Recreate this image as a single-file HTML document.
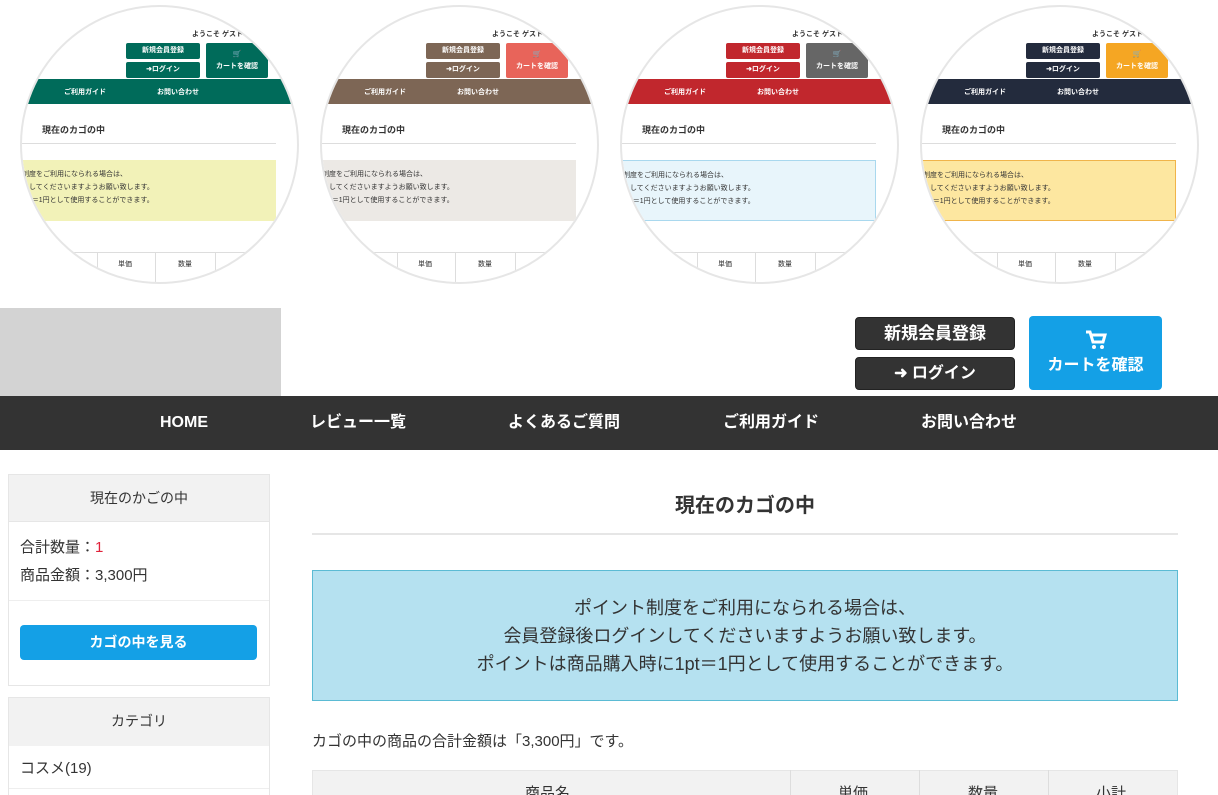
<!DOCTYPE html>
<html><head><meta charset="utf-8"><style>
*{margin:0;padding:0;box-sizing:border-box}
html,body{width:1218px;height:795px;overflow:hidden}
body{background:#fff;font-family:"Liberation Sans","Noto Sans CJK JP",sans-serif;color:#333;position:relative}
.a{position:absolute}
.c{position:absolute;top:5px;width:279px;height:279px;border-radius:50%;overflow:hidden;border:2px solid #e6e6e6;background:#fff}
.c .a{font-size:7px;font-weight:bold}
.btn{color:#fff;text-align:center;border-radius:2px;line-height:15px}
.nav{color:#fff;font-size:16px;font-weight:bold;top:396px;height:54px;line-height:54px}
</style></head><body>

<div class="c" style="left:20px">
 <div class="a" style="left:170px;top:22px;color:#333">ようこそ ゲスト</div>
 <div class="a btn" style="left:104px;top:36px;width:74px;height:16px;background:#006b5a">新規会員登録</div>
 <div class="a btn" style="left:104px;top:55px;width:74px;height:16px;background:#006b5a">➜ログイン</div>
 <div class="a btn" style="left:184px;top:36px;width:62px;height:35px;background:#006b5a;line-height:12px;padding-top:6px">🛒<br>カートを確認</div>
 <div class="a" style="left:0;top:72px;width:279px;height:25px;background:#006b5a"></div>
 <div class="a" style="left:42px;top:80px;color:#fff">ご利用ガイド</div>
 <div class="a" style="left:135px;top:80px;color:#fff">お問い合わせ</div>
 <div class="a" style="left:20px;top:116px;font-size:9px;color:#333">現在のカゴの中</div>
 <div class="a" style="left:0;top:136px;width:254px;height:1px;background:#ddd"></div>
 <div class="a" style="left:0;top:153px;width:254px;height:61px;background:#f2f2b8;font-weight:normal;color:#333;padding:8px 0 0 0;line-height:13px">制度をご利用になられる場合は、<br>・してくださいますようお願い致します。<br>1pt＝1円として使用することができます。</div>
 <div class="a" style="left:0;top:245px;width:279px;height:1px;background:#ddd"></div>
 <div class="a" style="left:75px;top:245px;width:1px;height:40px;background:#ddd"></div>
 <div class="a" style="left:133px;top:245px;width:1px;height:40px;background:#ddd"></div>
 <div class="a" style="left:193px;top:245px;width:1px;height:40px;background:#ddd"></div>
 <div class="a" style="left:96px;top:252px;font-weight:normal">単価</div>
 <div class="a" style="left:156px;top:252px;font-weight:normal">数量</div>
</div>

<div class="c" style="left:320px">
 <div class="a" style="left:170px;top:22px;color:#333">ようこそ ゲスト</div>
 <div class="a btn" style="left:104px;top:36px;width:74px;height:16px;background:#7d6655">新規会員登録</div>
 <div class="a btn" style="left:104px;top:55px;width:74px;height:16px;background:#7d6655">➜ログイン</div>
 <div class="a btn" style="left:184px;top:36px;width:62px;height:35px;background:#e8645a;line-height:12px;padding-top:6px">🛒<br>カートを確認</div>
 <div class="a" style="left:0;top:72px;width:279px;height:25px;background:#7d6655"></div>
 <div class="a" style="left:42px;top:80px;color:#fff">ご利用ガイド</div>
 <div class="a" style="left:135px;top:80px;color:#fff">お問い合わせ</div>
 <div class="a" style="left:20px;top:116px;font-size:9px;color:#333">現在のカゴの中</div>
 <div class="a" style="left:0;top:136px;width:254px;height:1px;background:#ddd"></div>
 <div class="a" style="left:0;top:153px;width:254px;height:61px;background:#ece9e5;font-weight:normal;color:#333;padding:8px 0 0 0;line-height:13px">制度をご利用になられる場合は、<br>・してくださいますようお願い致します。<br>1pt＝1円として使用することができます。</div>
 <div class="a" style="left:0;top:245px;width:279px;height:1px;background:#ddd"></div>
 <div class="a" style="left:75px;top:245px;width:1px;height:40px;background:#ddd"></div>
 <div class="a" style="left:133px;top:245px;width:1px;height:40px;background:#ddd"></div>
 <div class="a" style="left:193px;top:245px;width:1px;height:40px;background:#ddd"></div>
 <div class="a" style="left:96px;top:252px;font-weight:normal">単価</div>
 <div class="a" style="left:156px;top:252px;font-weight:normal">数量</div>
</div>

<div class="c" style="left:620px">
 <div class="a" style="left:170px;top:22px;color:#333">ようこそ ゲスト</div>
 <div class="a btn" style="left:104px;top:36px;width:74px;height:16px;background:#c1272d">新規会員登録</div>
 <div class="a btn" style="left:104px;top:55px;width:74px;height:16px;background:#c1272d">➜ログイン</div>
 <div class="a btn" style="left:184px;top:36px;width:62px;height:35px;background:#666;line-height:12px;padding-top:6px">🛒<br>カートを確認</div>
 <div class="a" style="left:0;top:72px;width:279px;height:25px;background:#c1272d"></div>
 <div class="a" style="left:42px;top:80px;color:#fff">ご利用ガイド</div>
 <div class="a" style="left:135px;top:80px;color:#fff">お問い合わせ</div>
 <div class="a" style="left:20px;top:116px;font-size:9px;color:#333">現在のカゴの中</div>
 <div class="a" style="left:0;top:136px;width:254px;height:1px;background:#ddd"></div>
 <div class="a" style="left:0;top:153px;width:254px;height:61px;background:#e8f5fb;border:1px solid #a9d8ee;font-weight:normal;color:#333;padding:8px 0 0 0;line-height:13px">制度をご利用になられる場合は、<br>・してくださいますようお願い致します。<br>1pt＝1円として使用することができます。</div>
 <div class="a" style="left:0;top:245px;width:279px;height:1px;background:#ddd"></div>
 <div class="a" style="left:75px;top:245px;width:1px;height:40px;background:#ddd"></div>
 <div class="a" style="left:133px;top:245px;width:1px;height:40px;background:#ddd"></div>
 <div class="a" style="left:193px;top:245px;width:1px;height:40px;background:#ddd"></div>
 <div class="a" style="left:96px;top:252px;font-weight:normal">単価</div>
 <div class="a" style="left:156px;top:252px;font-weight:normal">数量</div>
</div>

<div class="c" style="left:920px">
 <div class="a" style="left:170px;top:22px;color:#333">ようこそ ゲスト</div>
 <div class="a btn" style="left:104px;top:36px;width:74px;height:16px;background:#232b3d">新規会員登録</div>
 <div class="a btn" style="left:104px;top:55px;width:74px;height:16px;background:#232b3d">➜ログイン</div>
 <div class="a btn" style="left:184px;top:36px;width:62px;height:35px;background:#f5a623;line-height:12px;padding-top:6px">🛒<br>カートを確認</div>
 <div class="a" style="left:0;top:72px;width:279px;height:25px;background:#232b3d"></div>
 <div class="a" style="left:42px;top:80px;color:#fff">ご利用ガイド</div>
 <div class="a" style="left:135px;top:80px;color:#fff">お問い合わせ</div>
 <div class="a" style="left:20px;top:116px;font-size:9px;color:#333">現在のカゴの中</div>
 <div class="a" style="left:0;top:136px;width:254px;height:1px;background:#ddd"></div>
 <div class="a" style="left:0;top:153px;width:254px;height:61px;background:#fde7a0;border:1px solid #f0b44a;font-weight:normal;color:#333;padding:8px 0 0 0;line-height:13px">制度をご利用になられる場合は、<br>・してくださいますようお願い致します。<br>1pt＝1円として使用することができます。</div>
 <div class="a" style="left:0;top:245px;width:279px;height:1px;background:#ddd"></div>
 <div class="a" style="left:75px;top:245px;width:1px;height:40px;background:#ddd"></div>
 <div class="a" style="left:133px;top:245px;width:1px;height:40px;background:#ddd"></div>
 <div class="a" style="left:193px;top:245px;width:1px;height:40px;background:#ddd"></div>
 <div class="a" style="left:96px;top:252px;font-weight:normal">単価</div>
 <div class="a" style="left:156px;top:252px;font-weight:normal">数量</div>
</div>

<div class="a" style="left:0;top:308px;width:281px;height:88px;background:#d3d3d3"></div>
<div class="a" style="left:855px;top:317px;width:160px;height:33px;background:#333;border:1px solid #222;border-radius:4px;color:#fff;font-size:17px;font-weight:bold;text-align:center;line-height:31px">新規会員登録</div>
<div class="a" style="left:855px;top:357px;width:160px;height:33px;background:#333;border:1px solid #222;border-radius:4px;color:#fff;font-size:16px;font-weight:bold;text-align:center;line-height:31px">➜ ログイン</div>
<div class="a" style="left:1029px;top:316px;width:133px;height:74px;background:#14a0e6;border-radius:4px;color:#fff;font-size:16px;font-weight:bold;text-align:center">
 <svg width="22" height="20" viewBox="0 0 22 20" style="margin-top:14px"><path d="M1 2h4l3 10h10l2-7H7" fill="none" stroke="#fff" stroke-width="3"/><circle cx="9" cy="17" r="2" fill="#fff"/><circle cx="17" cy="17" r="2" fill="#fff"/></svg>
 <div style="margin-top:-4px">カートを確認</div></div>
<div class="a" style="left:0;top:396px;width:1218px;height:54px;background:#333"></div>
<div class="a nav" style="left:160px">HOME</div>
<div class="a nav" style="left:310px">レビュー一覧</div>
<div class="a nav" style="left:508px">よくあるご質問</div>
<div class="a nav" style="left:723px">ご利用ガイド</div>
<div class="a nav" style="left:921px">お問い合わせ</div>

<div class="a" style="left:8px;top:474px;width:262px;height:212px;border:1px solid #e6e6e6"></div>
<div class="a" style="left:9px;top:475px;width:260px;height:47px;background:#f2f2f2;border-bottom:1px solid #e6e6e6;text-align:center;line-height:46px;font-size:14px">現在のかごの中</div>
<div class="a" style="left:20px;top:534px;font-size:15px;line-height:28px">合計数量：<span style="color:#e0223a">1</span><br>商品金額：3,300円</div>
<div class="a" style="left:9px;top:600px;width:260px;height:1px;background:#eee"></div>
<div class="a" style="left:20px;top:625px;width:237px;height:35px;background:#14a0e6;border-radius:4px;color:#fff;font-weight:bold;font-size:14px;text-align:center;line-height:35px">カゴの中を見る</div>
<div class="a" style="left:8px;top:697px;width:262px;height:110px;border:1px solid #e6e6e6"></div>
<div class="a" style="left:9px;top:698px;width:260px;height:48px;background:#f2f2f2;text-align:center;line-height:46px;font-size:14px">カテゴリ</div>
<div class="a" style="left:20px;top:757px;font-size:15px">コスメ(19)</div>
<div class="a" style="left:9px;top:788px;width:260px;height:1px;background:#eee"></div>

<div class="a" style="left:312px;top:489px;width:866px;text-align:center;font-size:20px;font-weight:bold">現在のカゴの中</div>
<div class="a" style="left:312px;top:533px;width:866px;height:2px;background:#e6e6e6"></div>
<div class="a" style="left:312px;top:570px;width:866px;height:131px;background:#b5e1f0;border:1px solid #5bbbd4;text-align:center;font-size:18px;line-height:28px;padding-top:23px">ポイント制度をご利用になられる場合は、<br>会員登録後ログインしてくださいますようお願い致します。<br>ポイントは商品購入時に1pt＝1円として使用することができます。</div>
<div class="a" style="left:312px;top:730px;font-size:15px">カゴの中の商品の合計金額は「3,300円」です。</div>
<div class="a" style="left:312px;top:770px;width:866px;height:30px;background:#f2f2f2;border:1px solid #e6e6e6"></div>
<div class="a" style="left:790px;top:770px;width:1px;height:30px;background:#ddd"></div>
<div class="a" style="left:919px;top:770px;width:1px;height:30px;background:#ddd"></div>
<div class="a" style="left:1048px;top:770px;width:1px;height:30px;background:#ddd"></div>
<div class="a" style="left:525px;top:782px;font-size:15px">商品名</div>
<div class="a" style="left:838px;top:782px;font-size:15px">単価</div>
<div class="a" style="left:968px;top:782px;font-size:15px">数量</div>
<div class="a" style="left:1096px;top:782px;font-size:15px">小計</div>
</body></html>
